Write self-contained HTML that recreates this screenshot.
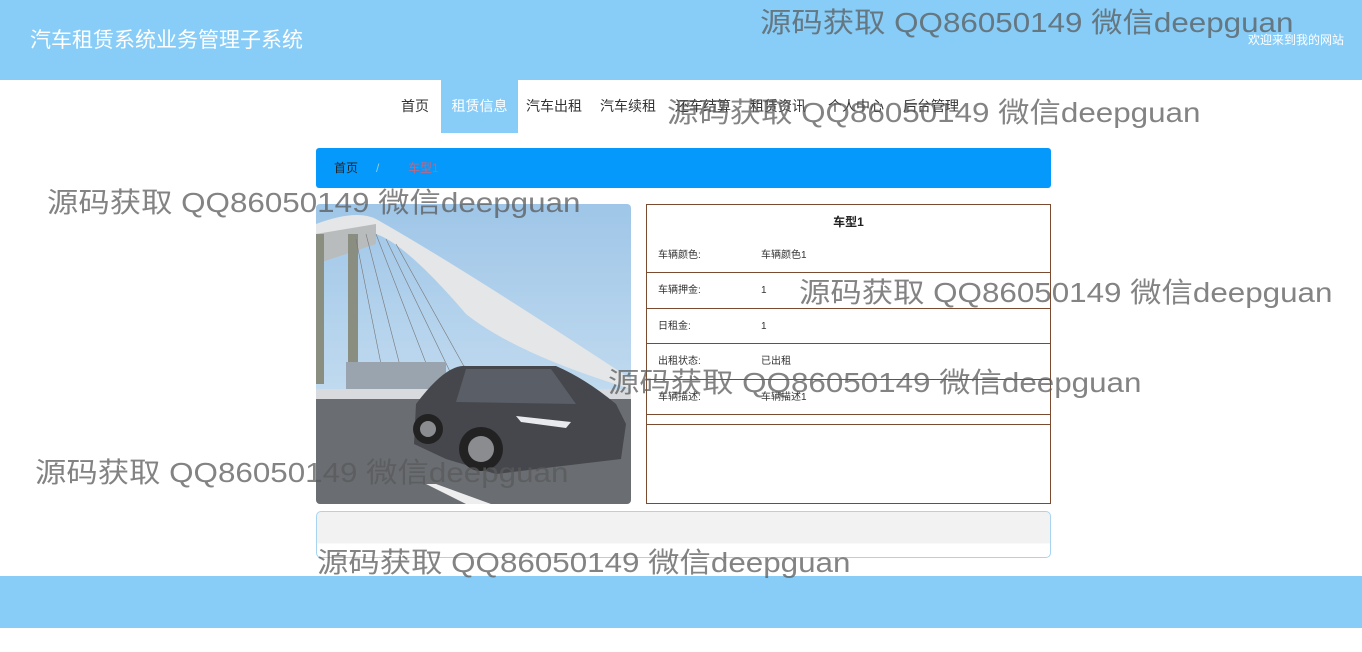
<!DOCTYPE html>
<html><head><meta charset="utf-8"><style>
*{margin:0;padding:0;box-sizing:border-box}
body{width:1362px;height:652px;background:#fff;font-family:"Liberation Sans","Noto Sans CJK SC",sans-serif;position:relative;overflow:hidden}
.hdr{position:absolute;left:0;top:0;width:1362px;height:80px;background:#88cdf8}
.title{position:absolute;left:30px;top:24px;color:#fff;font-size:21px}
.welcome{position:absolute;right:18px;top:31px;color:#fff;font-size:12px}
.nav{position:absolute;top:80px;left:0;width:1362px;height:53px}
.nav span{position:absolute;top:0;height:53px;line-height:53px;font-size:14px;color:#333}
.nav .act{background:#88cdf8;color:#fff;width:77px;text-align:center}
.bc{position:absolute;left:316px;top:148px;width:735px;height:40px;background:#0499fb;border-radius:3px;font-size:12px;line-height:40px}
.box{position:absolute;left:646px;top:204px;width:405px;height:300px;border:1px solid #7a4b30}
.ln{position:absolute;left:0;width:403px;border-top:1px solid #7a4b30}
.lb,.vl{position:absolute;font-size:10px;line-height:12px;color:#333}
.lb{left:11px}.vl{left:114px}
.img{position:absolute;left:316px;top:204px;width:315px;height:300px;border-radius:4px;overflow:hidden}
.pan{position:absolute;left:316px;top:511px;width:735px;height:47px;border:1px solid #a8d4f0;border-radius:5px;background:linear-gradient(#f2f2f2 0,#f2f2f2 31px,#fff 32px)}
.ftr{position:absolute;left:0;top:576px;width:1362px;height:52px;background:#88cdf8}
.wm{position:absolute;font-size:28px;line-height:36px;color:rgba(90,90,90,.75);white-space:nowrap;transform:scaleX(1.12);transform-origin:0 0}
</style></head><body>
<div class="hdr"><div class="title">汽车租赁系统业务管理子系统</div><div class="welcome">欢迎来到我的网站</div></div>
<div class="nav">
<span style="left:401px">首页</span>
<span class="act" style="left:441px">租赁信息</span>
<span style="left:526px">汽车出租</span>
<span style="left:600px">汽车续租</span>
<span style="left:675px">还车结算</span>
<span style="left:750px">租赁资讯</span>
<span style="left:828px">个人中心</span>
<span style="left:903px">后台管理</span>
</div>
<div class="bc"><span style="position:absolute;left:18px;color:#222">首页</span><span style="position:absolute;left:60px;color:#9cc">/</span><span style="position:absolute;left:92px;color:#b86a8a">车型1</span></div>
<div class="img"><svg width="315" height="300" viewBox="0 0 315 300">
<defs><linearGradient id="s" x1="0" y1="0" x2="0" y2="1"><stop offset="0" stop-color="#9fc6e8"/><stop offset="1" stop-color="#d4e6f3"/></linearGradient></defs>
<rect width="315" height="300" fill="url(#s)"/>
<path d="M0 20 Q40 5 60 15 Q140 60 315 175 L315 185 Q200 150 150 110 Q90 40 60 30 L0 40Z" fill="#e4e6e8"/>
<path d="M0 30 L60 20 L60 40 L0 60Z" fill="#b9bcbd"/>
<rect x="32" y="30" width="10" height="160" fill="#8a8e80"/>
<rect x="0" y="30" width="8" height="150" fill="#8a8e80"/>
<g stroke="#777" stroke-width=".6"><line x1="60" y1="30" x2="120" y2="185"/><line x1="70" y1="35" x2="140" y2="180"/><line x1="50" y1="30" x2="90" y2="185"/><line x1="40" y1="35" x2="70" y2="185"/><line x1="80" y1="40" x2="155" y2="175"/></g>
<rect x="30" y="158" width="100" height="30" fill="#9aa4ae"/>
<rect x="0" y="185" width="315" height="115" fill="#6a6d72"/>
<rect x="0" y="185" width="315" height="10" fill="#d8dade"/>
<path d="M110 280 L150 300 L175 300 L120 280Z" fill="#eee"/>
<path d="M100 200 Q130 160 150 162 L240 162 Q270 175 300 200 L310 220 L305 255 L180 270 L130 255 L98 240Z" fill="#45474c"/>
<path d="M150 165 L235 165 L260 200 L140 198Z" fill="#5a5e66"/>
<circle cx="165" cy="245" r="22" fill="#222"/><circle cx="165" cy="245" r="13" fill="#8a8c90"/>
<circle cx="112" cy="225" r="15" fill="#222"/><circle cx="112" cy="225" r="8" fill="#8a8c90"/>
<path d="M200 212 L255 218 L250 224 L205 218Z" fill="#e8eaee"/>
</svg></div>
<div class="box">
<div style="position:absolute;top:8px;width:403px;text-align:center;font-size:12px;font-weight:bold;color:#222">车型1</div>
<div class="lb" style="top:45px">车辆颜色:</div><div class="vl" style="top:45px">车辆颜色1</div>
<div class="ln" style="top:67px"></div>
<div class="lb" style="top:80px">车辆押金:</div><div class="vl" style="top:80px">1</div>
<div class="ln" style="top:103px"></div>
<div class="lb" style="top:116px">日租金:</div><div class="vl" style="top:116px">1</div>
<div class="ln" style="top:138px"></div>
<div class="lb" style="top:151px">出租状态:</div><div class="vl" style="top:151px">已出租</div>
<div class="ln" style="top:174px"></div>
<div class="lb" style="top:187px">车辆描述:</div><div class="vl" style="top:187px">车辆描述1</div>
<div class="ln" style="top:209px"></div>
<div class="ln" style="top:219px"></div>
</div>
<div class="pan"></div>
<div class="ftr"></div>
<div class="wm" style="left:760px;top:5px">源码获取 QQ86050149 微信deepguan</div>
<div class="wm" style="left:667px;top:95px">源码获取 QQ86050149 微信deepguan</div>
<div class="wm" style="left:47px;top:185px">源码获取 QQ86050149 微信deepguan</div>
<div class="wm" style="left:799px;top:275px">源码获取 QQ86050149 微信deepguan</div>
<div class="wm" style="left:608px;top:365px">源码获取 QQ86050149 微信deepguan</div>
<div class="wm" style="left:35px;top:455px">源码获取 QQ86050149 微信deepguan</div>
<div class="wm" style="left:317px;top:545px">源码获取 QQ86050149 微信deepguan</div>
</body></html>
